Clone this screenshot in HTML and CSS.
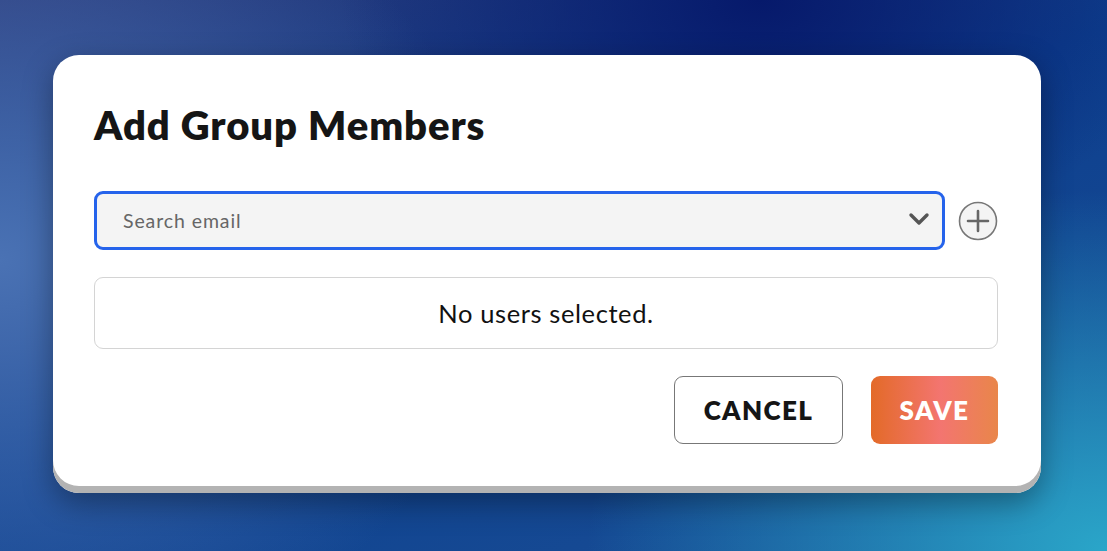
FILE: index.html
```html
<!DOCTYPE html>
<html lang="en">
<head>
    <meta charset="UTF-8">
    <meta name="viewport" content="width=device-width, initial-scale=1.0">
    <title>Add Group Members</title>
    <link rel="stylesheet" href="styles.css">
</head>
<body>

<div class="modal">
    <h1>Add Group Members</h1>

    <div class="search-row">
        <div class="search">
            <span class="placeholder">Search email</span>
            <svg class="chevron" width="22" height="14" viewBox="0 0 22 14">
                <path d="M3 3 L11 11 L19 3" fill="none" stroke="#555" stroke-width="3.4" stroke-linecap="round" stroke-linejoin="round"/>
            </svg>
        </div>
        <svg class="add" width="40" height="40" viewBox="0 0 40 40">
            <circle cx="20" cy="20" r="18.5" fill="#f4f4f4" stroke="#777" stroke-width="1.6"/>
            <path d="M20 10 V30 M10 20 H30" stroke="#666" stroke-width="2.6" stroke-linecap="round"/>
        </svg>
    </div>

    <div class="selected">No users selected.</div>

    <div class="actions">
        <button class="btn btn-cancel">CANCEL</button>
        <button class="btn btn-save">SAVE</button>
    </div>
</div>

</body>
</html>
```

FILE: styles.css
```css
body {
    margin: 0;
    height: 551px;
    overflow: hidden;
    font-family: Lato, "Liberation Sans", sans-serif;
    background:
        radial-gradient(ellipse 420px 260px at 760px 0px, #06196b 0%, rgba(6,25,107,0) 100%),
        radial-gradient(ellipse 500px 420px at 0px 260px, #4a72b4 0%, rgba(74,114,180,0) 100%),
        radial-gradient(ellipse 520px 360px at 1107px 551px, #2aa6c9 0%, rgba(42,166,201,0) 100%),
        linear-gradient(160deg, #2a3878 0%, #0d3f8e 45%, #1a4f96 100%);
}
.modal {
    margin: 55px 0 0 53px;
    width: 988px;
    box-sizing: border-box;
    padding: 30px 43px 49px 41px;
    background-color: white;
    border-radius: 26px;
    box-shadow: inset 0 -7px 0 #b3b3b3, 0 10px 30px rgba(0, 0, 0, 0.35);
}
h1 {
    margin: 0;
    font-size: 40px;
    font-weight: 800;
    color: #151515;
    line-height: 80px;
    letter-spacing: 0.9px;
}
.search-row {
    display: flex;
    align-items: center;
    gap: 13px;
    margin-top: 26px;
}
.search {
    flex: 1;
    height: 59px;
    box-sizing: border-box;
    border: 3px solid #2563eb;
    border-radius: 9px;
    background-color: #f4f4f4;
    display: flex;
    align-items: center;
    justify-content: space-between;
    padding: 0 12px 0 26px;
}
.placeholder {
    font-size: 19.5px;
    color: #666;
    letter-spacing: 0.9px;
}
.chevron {
    margin-top: -4px;
}
.selected {
    margin-top: 27px;
    height: 72px;
    box-sizing: border-box;
    border: 1.5px solid #d4d4d4;
    border-radius: 9px;
    display: flex;
    align-items: center;
    justify-content: center;
    font-size: 25.5px;
    color: #111;
    letter-spacing: 0.6px;
}
.actions {
    display: flex;
    justify-content: flex-end;
    gap: 28px;
    margin-top: 27px;
}
.btn {
    height: 68px;
    border-radius: 9px;
    font-family: Lato, "Liberation Sans", sans-serif;
    font-size: 26px;
    font-weight: 800;
    letter-spacing: 1.4px;
    cursor: pointer;
}
.btn-cancel {
    width: 169px;
    background-color: white;
    border: 1.5px solid #777;
    color: #151515;
}
.btn-save {
    width: 127px;
    border: none;
    color: white;
    background: linear-gradient(90deg, #e36a28 0%, #f37570 55%, #e9864a 100%);
}
```
